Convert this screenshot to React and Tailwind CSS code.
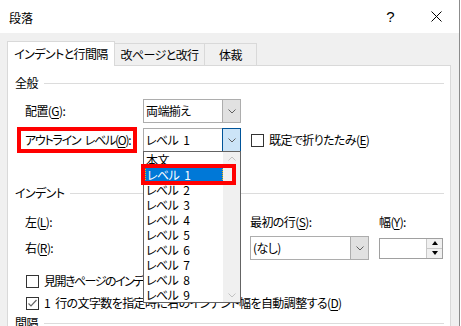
import React from 'react';

const FONT = "font-['Noto_Sans_CJK_JP','Noto_Sans_CJK_SC',sans-serif] [font-feature-settings:'palt'] tracking-[-0.6px] [word-spacing:3px]";

const levels = ['本文', 'レベル 1', 'レベル 2', 'レベル 3', 'レベル 4', 'レベル 5', 'レベル 6', 'レベル 7', 'レベル 8', 'レベル 9'];

function Chevron({ color = '#606060', up = false }) {
  return (
    <svg width="8" height="5" viewBox="0 0 8 5" className="block">
      <path d={up ? 'M0.5 4.5 L4 1 L7.5 4.5' : 'M0.5 0.5 L4 4 L7.5 0.5'} fill="none" stroke={color} strokeWidth="1" />
    </svg>
  );
}

function Mn({ children }) {
  return <span className="underline underline-offset-2">{children}</span>;
}

function GroupHeader({ children }) {
  return (
    <div className="h-[18px] flex items-center pl-[7px] pr-[6px]">
      <span className="whitespace-nowrap">{children}</span>
      <div className="flex-1 h-px bg-[#dcdcdc] ml-[6px]" />
    </div>
  );
}

function Select({ value, width, focused = false, children }) {
  return (
    <div className={`relative h-[24px] ${width} flex border border-[#adadad] bg-white`}>
      <div className="flex-1 flex items-center pl-[2px] whitespace-nowrap">{value}</div>
      <div
        className={`flex items-center justify-center ${
          focused ? 'w-[19px] bg-[#cce4f7] border border-[#005499] -my-px -mr-px' : 'w-[18px] bg-[#e1e1e1] border-l border-[#adadad]'
        }`}
      >
        <Chevron />
      </div>
      {children}
    </div>
  );
}

function Spin({ width }) {
  return (
    <div className={`h-[21px] ${width} flex border border-[#a0a0a0] bg-white`}>
      <div className="flex-1" />
      <div className="w-[16px] flex flex-col">
        <div className="flex-1 flex items-center justify-center bg-[#f0f0f0] border-l border-b border-[#c8c8c8]">
          <svg width="6" height="4" viewBox="0 0 6 4"><path d="M0 4 L3 0 L6 4 Z" fill="#000" /></svg>
        </div>
        <div className="flex-1 flex items-center justify-center bg-[#f0f0f0] border-l border-[#c8c8c8]">
          <svg width="6" height="4" viewBox="0 0 6 4"><path d="M0 0 L3 4 L6 0 Z" fill="#000" /></svg>
        </div>
      </div>
    </div>
  );
}

function Checkbox({ checked = false }) {
  return (
    <div className="shrink-0 w-[13px] h-[13px] border border-[#333] bg-white flex items-center justify-center">
      {checked && (
        <svg width="11" height="11" viewBox="0 0 11 11">
          <path d="M1.5 5.5 L4 8 L9.5 2" fill="none" stroke="#666" strokeWidth="1.2" />
        </svg>
      )}
    </div>
  );
}

function LevelList() {
  return (
    <div className="absolute top-full -left-px z-20 w-[98px] flex border border-[#646464] bg-white">
      <div className="w-[79px] flex flex-col">
        {levels.map((l, i) => (
          <div key={l} className="relative h-[15px] whitespace-nowrap">
            {i === 1 ? (
              <div className="h-full ml-px flex items-center pl-px bg-[#0078d7] text-white border border-dotted border-[#f7b500]">
                {l}
              </div>
            ) : (
              <div className="h-full flex items-center pl-[2px]">{l}</div>
            )}
            {i === 1 && (
              <div className="absolute -left-[3px] -top-[3px] w-[95px] h-[21px] border-[4px] border-[#ff0000]" />
            )}
          </div>
        ))}
      </div>
      <div className="w-[17px] bg-[#f0f0f0] flex flex-col justify-between items-center py-[4px]">
        <Chevron color="#c2c2c2" up />
        <Chevron color="#c2c2c2" />
      </div>
    </div>
  );
}

export default function App() {
  return (
    <div className={`w-[461px] h-[326px] overflow-hidden bg-white text-[12px] leading-none text-black ${FONT}`}>
      <div className="w-[460px] h-full flex flex-col bg-[#f0f0f0] border-r border-[#8c8c8c]">
        {/* title bar */}
        <div className="h-[33px] shrink-0 bg-white flex items-center">
          <span className="pl-[9px] pt-[2px] tracking-normal">段落</span>
          <div className="ml-auto flex h-full">
            <div className="w-[46px] flex items-center justify-center font-['Liberation_Sans',sans-serif] text-[15px]">?</div>
            <div className="w-[46px] flex items-center justify-center">
              <svg width="11" height="11" viewBox="0 0 11 11">
                <path d="M0.5 0.5 L10.5 10.5 M10.5 0.5 L0.5 10.5" stroke="#000" strokeWidth="1" />
              </svg>
            </div>
          </div>
        </div>

        {/* body */}
        <div className="flex-1 flex flex-col pl-[7px] pr-[8px] pt-[8px]">
          <div className="flex items-end whitespace-nowrap">
            <div className="relative z-10 -mb-px h-[25px] w-[108px] bg-white border-x border-t border-[#d9d9d9] flex items-center justify-center">
              インデントと行間隔
            </div>
            <div className="h-[22px] w-[90px] border-t border-r border-[#d9d9d9] flex items-center justify-center">
              改ページと改行
            </div>
            <div className="h-[22px] w-[52px] border-t border-r border-[#d9d9d9] flex items-center justify-center">
              体裁
            </div>
          </div>

          <div className="flex-1 bg-white border border-[#d9d9d9] pt-[8px] flex flex-col whitespace-nowrap">
            <GroupHeader>全般</GroupHeader>

            <div className="mt-[7px] h-[24px] flex items-center pl-[17px]">
              <div className="w-[118px] shrink-0">配置(<Mn>G</Mn>):</div>
              <Select value="両端揃え" width="w-[98px]" />
            </div>

            <div className="relative z-20 mt-[5px] h-[24px] flex items-center pl-[17px]">
              <div className="relative w-[118px] shrink-0 h-full flex items-center tracking-[-1.25px]">
                アウトライン レベル(<Mn>O</Mn>):
                <div className="absolute -left-[8px] -top-px w-[120px] h-[26px] border-[4px] border-[#ff0000]" />
              </div>
              <Select value="レベル 1" width="w-[98px]" focused>
                <LevelList />
              </Select>
              <div className="ml-[10px] flex items-center gap-[5px]">
                <Checkbox />
                <span>既定で折りたたみ(<Mn>E</Mn>)</span>
              </div>
            </div>

            <div className="mt-[32px]">
              <GroupHeader>インデント</GroupHeader>
            </div>

            <div className="mt-[10px] h-[20px] flex items-center pl-[17px]">
              <div className="w-[118px] shrink-0">左(<Mn>L</Mn>):</div>
              <div className="w-[107px] shrink-0">
                <Spin width="w-[65px]" />
              </div>
              <div className="w-[129px] shrink-0">最初の行(<Mn>S</Mn>):</div>
              <div>幅(<Mn>Y</Mn>):</div>
            </div>

            <div className="mt-[4px] h-[24px] flex items-center pl-[17px]">
              <div className="w-[118px] shrink-0">右(<Mn>R</Mn>):</div>
              <div className="w-[107px] shrink-0">
                <Spin width="w-[65px]" />
              </div>
              <div className="w-[129px] shrink-0">
                <Select value="(なし)" width="w-[119px]" />
              </div>
              <Spin width="w-[64px]" />
            </div>

            <div className="mt-[13px] h-[16px] flex items-center pl-[18px] gap-[5px]">
              <Checkbox />
              <span className="tracking-[-1.5px]">見開きページのインデント幅を設定する(<Mn>M</Mn>)</span>
            </div>

            <div className="mt-[6px] h-[16px] flex items-center pl-[18px] gap-[5px]">
              <Checkbox checked />
              <span>1 行の文字数を指定時に右のインデント幅を自動調整する(<Mn>D</Mn>)</span>
            </div>

            <div className="mt-[3px]">
              <GroupHeader>間隔</GroupHeader>
            </div>
          </div>
        </div>
      </div>
    </div>
  );
}
